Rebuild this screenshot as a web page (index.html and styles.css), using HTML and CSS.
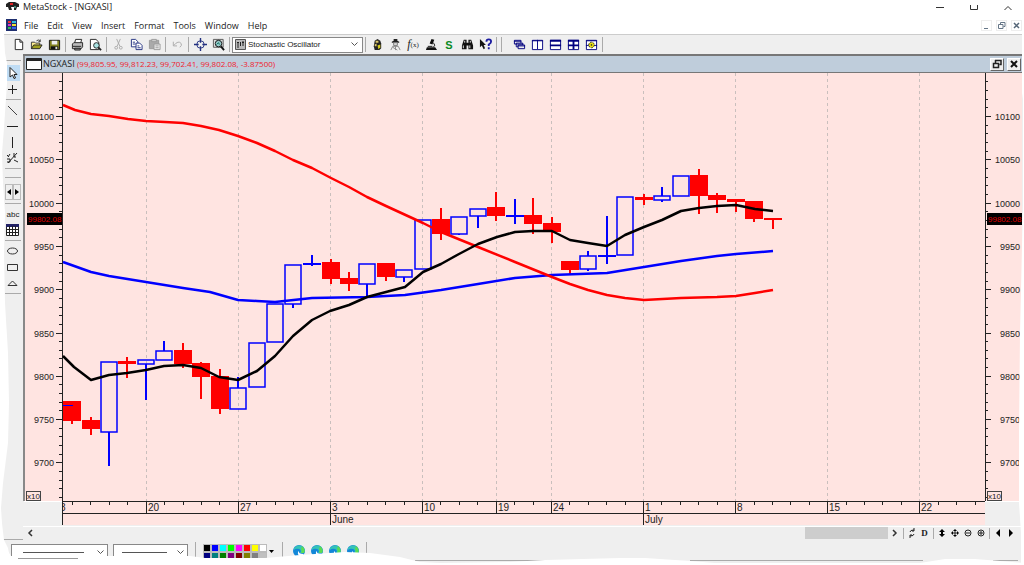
FILE: index.html
```
<!DOCTYPE html>
<html lang="en">
<head>
  <meta charset="UTF-8">
  <meta name="viewport" content="width=device-width, initial-scale=1.0">
  <title>MetaStock - [NGXASI]</title>

  <link rel="stylesheet" href="styles.css">
</head>
<body>
  <header class="titlebar">
    <svg class="app-icon" width="13" height="9" viewBox="0 0 13 9"><path d="M0 2L3 0H9L13 2V5L11 5L10 8H8V5H5L6 8H3L2 5H0Z" fill="#222"/><path d="M4 1H7V3H4Z" fill="#d22"/><path d="M8 4H10V6H8Z" fill="#487"/></svg>
    <h1 class="title">MetaStock - [NGXASI]</h1>
    <div class="window-buttons">
      <button aria-label="Minimize"><svg width="8" height="8"><path d="M0 4.500H8" stroke="#333"/></svg></button>
      <button aria-label="Maximize"><svg width="8" height="8"><path d="M.5 2V6.500H7.500V2" fill="none" stroke="#333"/></svg></button>
      <button aria-label="Close"><svg width="8" height="8"><path d="M.5 7L4 3.500L7.500 7" fill="none" stroke="#333"/></svg></button>
    </div>
  </header>

  <nav class="menubar">
    <svg class="doc-icon" width="11" height="12" viewBox="0 0 11 12"><path d="M0 0H11V12H0Z" fill="#203070"/><path d="M2 2H5V4H2Z" fill="#e33"/><path d="M6 2H10V4H6Z" fill="#3bd"/><path d="M2 5H5V7H2Z" fill="#d3c"/><path d="M6 5H10V7H6Z" fill="#ed3"/><path d="M2 8H5V10H2Z" fill="#3b5"/><path d="M6 8H10V10H6Z" fill="#36e"/></svg>
    <a href="#">File</a>
    <a href="#">Edit</a>
    <a href="#">View</a>
    <a href="#">Insert</a>
    <a href="#">Format</a>
    <a href="#">Tools</a>
    <a href="#">Window</a>
    <a href="#">Help</a>
    <div class="child-buttons">
      <button aria-label="Minimize chart"><svg width="9" height="9"><path d="M2 7.500H6" stroke="#678"/></svg></button>
      <button aria-label="Restore chart"><svg width="9" height="9"><path d="M3.500 3V1.500H8V5.500H6.500M1.500 3.500H6V7.500H1.500Z" fill="none" stroke="#678"/></svg></button>
      <button aria-label="Close chart"><svg width="9" height="9"><path d="M2 2L7 7M7 2L2 7" stroke="#567" stroke-width="1.500"/></svg></button>
    </div>
  </nav>

  <div class="toolbar">
    <button aria-label="New"><svg viewBox="0 0 14 14"><path d="M3.500 1.500H8.500L11.500 4.500V12.500H3.500ZM8.500 1.500V4.500H11.500" fill="#fff" stroke="#222"/></svg></button>
    <button aria-label="Open"><svg viewBox="0 0 14 14"><path d="M1.500 11.500V4.500H5L6 5.500H10.500V7.500" fill="#ffef90" stroke="#333"/><path d="M1.500 11.500L4 7.500H13L10.500 11.500Z" fill="#a0a020" stroke="#222"/><path d="M7 3Q9 1 11 3.500M11 1.500V4H9" fill="none" stroke="#333"/></svg></button>
    <button aria-label="Save"><svg viewBox="0 0 14 14"><path d="M1.500 2.500H12.500V12.500H1.500Z" fill="#808020" stroke="#111"/><path d="M4 3H10V7H4Z" fill="#eee"/><path d="M3 9H11V12H3Z" fill="#111"/><path d="M8 9.500H10V12H8Z" fill="#ddd"/></svg></button>
    <span class="sep"></span>
    <button aria-label="Print"><svg viewBox="0 0 14 14"><path d="M4 5L5 1.500H11.500L10.500 5" fill="#fff" stroke="#222"/><path d="M1.500 6.500L3 5H12.500V9.500L11 11.500H1.500Z" fill="#bbb" stroke="#222"/><path d="M2 9H11M4 11H10V13H4Z" fill="#888" stroke="#222"/></svg></button>
    <button aria-label="Print preview"><svg viewBox="0 0 14 14"><path d="M1.500 1.500H7.500L10.500 4.500V12.500H1.500Z" fill="#fff" stroke="#222"/><circle cx="8" cy="8" r="3" fill="#a9e3e3" stroke="#222"/><path d="M10 10L13 13" stroke="#222" stroke-width="2"/></svg></button>
    <span class="sep"></span>
    <button aria-label="Cut"><svg viewBox="0 0 14 14" fill="none" stroke="#aaa"><path d="M5 1L8.500 9M9 1L5.500 9"/><circle cx="4.500" cy="10.500" r="1.500"/><circle cx="9.500" cy="10.500" r="1.500"/></svg></button>
    <button aria-label="Copy"><svg viewBox="0 0 14 14" fill="#fff" stroke="#223080"><path d="M1.500 1.500H6L8.500 4V9.500H1.500Z"/><path d="M6.500 5.500H10.500L13 8V12.500H6.500Z"/><path d="M3 4.500H5.500M3 6.500H6M8 8.500H10M8 10.500H11.500"/></svg></button>
    <button aria-label="Paste"><svg viewBox="0 0 14 14"><path d="M1.500 2.500H11.500V11.500H1.500Z" fill="#aaa" stroke="#999"/><path d="M4 1.500H9V4H4Z" fill="#ccc" stroke="#999"/><path d="M6.500 6.500H13V12.500H6.500Z" fill="#eee" stroke="#999"/><path d="M8 8.500H11.500M8 10.500H11.500" stroke="#999"/></svg></button>
    <span class="sep"></span>
    <button aria-label="Undo"><svg viewBox="0 0 14 14"><path d="M2.500 4V8.500H6.500M3 8Q8 2 11 6Q12 8 9.500 10" fill="none" stroke="#aaa"/></svg></button>
    <span class="sep"></span>
    <button aria-label="Crosshairs"><svg viewBox="0 0 14 14" fill="none" stroke="#223080"><circle cx="7" cy="7" r="4"/><path d="M7 0V5M7 9V14M0 7H5M9 7H14" stroke-width="1.500"/></svg></button>
    <button aria-label="Zoom"><svg viewBox="0 0 14 14"><path d="M1.500 1.500H12V10H1.500Z" fill="#ddd" stroke="#555"/><circle cx="7" cy="6" r="3.500" fill="#9cc" stroke="#111"/><path d="M9.500 9L13 13" stroke="#111" stroke-width="2"/><path d="M5 7L7 5L8 7" fill="none" stroke="#065"/></svg></button>
    <span class="sep"></span>
    <label class="indicator">
      <svg width="11" height="11" viewBox="0 0 11 11"><path d="M.5 .5H10.500V10.500H.5Z" fill="#bbb" stroke="#555"/><path d="M3 3V9M5.500 3V7M8 2V7M2 3.500H4M7 3.500H9" stroke="#222"/></svg>
      <select aria-label="Indicator"><option>Stochastic Oscillator</option></select>
      <svg class="chevron" width="7" height="5"><path d="M.5 .5L3.500 3.500L6.500 .5" fill="none" stroke="#555"/></svg>
    </label>
    <span class="sep"></span>
    <button aria-label="Expert advisor"><svg viewBox="0 0 14 14"><path d="M4 3L7 1L10 3L11 6V11L9 13H4L3 9Z" fill="#222"/><path d="M5 3H8V5H5ZM4 7L6 6V9H4Z" fill="#dcc76a"/><path d="M7 8L10 7V10L8 12Z" fill="#d8d020"/></svg></button>
    <button aria-label="Explorer"><svg viewBox="0 0 14 14"><path d="M3 5H11V4L9 3V1H5V3L3 4Z" fill="#222"/><path d="M5 5H9V8H5Z" fill="#ddd" stroke="#777"/><path d="M2 13L4 9H10L12 13M7 9V13M4 10L9 13" fill="none" stroke="#888"/></svg></button>
    <button class="fx" aria-label="Indicator builder"><i>f</i><small>(x)</small></button>
    <button aria-label="System tester"><svg viewBox="0 0 14 14"><path d="M7 1L10 2L8 7L5 6Z" fill="#111"/><path d="M9 5Q12 8 9 10M3 9H8" fill="none" stroke="#111"/><path d="M2 10H11L13 13H1Z" fill="#111"/></svg></button>
    <button class="dollar" aria-label="Option scope">S</button>
    <button aria-label="Find symbols"><svg viewBox="0 0 14 14"><path d="M3 2H6V5H8V2H11L13 8V12H8V8H6V12H1V8Z" fill="#111"/><path d="M2.500 8V11M9.500 8V11M4 3V5M10 3V5" stroke="#eee"/></svg></button>
    <button aria-label="Context help"><svg viewBox="0 0 14 14"><path d="M1 1V10L3 8L5 12L6.500 11L5 7.500H7.500Z" fill="#111"/><path d="M8 4Q8 1.500 10.500 1.500Q13 1.500 13 4Q13 5.500 10.500 7V8.500M10.500 10V12" fill="none" stroke="#1b1ba0" stroke-width="2"/></svg></button>
    <span class="sep"></span>
    <span class="grip"></span>
    <button aria-label="Cascade"><svg viewBox="0 0 14 14" fill="#eee" stroke="#000080"><path d="M1.500 2.500H8.500V6.500H1.500ZM1 3.500H9"/><path d="M3.500 5.500H10.500V9.500H3.500ZM3 6.500H11"/><path d="M5.500 7.500H12.500V11.500H5.500ZM5 8.500H13"/></svg></button>
    <button aria-label="Tile columns"><svg viewBox="0 0 14 14" fill="#fff" stroke="#000080"><path d="M1.500 2.500H12.500V12.500H1.500ZM7 2V12M1 3H13"/></svg></button>
    <button aria-label="Tile rows"><svg viewBox="0 0 14 14" fill="#fff" stroke="#000080"><path d="M1.500 2.500H12.500V12.500H1.500Z"/><path d="M1 3H13M1 8H13" stroke-width="2"/></svg></button>
    <button aria-label="Tile grid"><svg viewBox="0 0 14 14" fill="#fff" stroke="#000080"><path d="M1.500 2.500H12.500V12.500H1.500Z"/><path d="M1 3H13M1 8H13M7 2V12" stroke-width="2"/></svg></button>
    <button aria-label="Tile options"><svg viewBox="0 0 14 14" fill="#fff" stroke="#000080"><path d="M1.500 2.500H12.500V12.500H1.500ZM1 3H13M1 8H13"/><circle cx="7" cy="7.500" r="3" fill="#e8e010" stroke="#222" stroke-dasharray="2 1"/><circle cx="7" cy="7.500" r=".5" stroke="#222"/></svg></button>
    <span class="sep"></span>
  </div>

  <main class="workspace">
    <aside class="rail">
      <span class="rail-grip"></span>
      <button class="active" aria-label="Select"><svg viewBox="0 0 14 14"><path d="M4 1.500V11L6.500 9L8 12.500L9.500 12L8 8.500H11Z" fill="#fff" stroke="#222"/></svg></button>
      <button aria-label="Crosshair"><svg viewBox="0 0 14 14" stroke="#222"><path d="M2 7.500H11M6.500 3V12"/></svg></button>
      <hr>
      <button aria-label="Trendline"><svg viewBox="0 0 14 14" stroke="#444"><path d="M2 3L11 12"/></svg></button>
      <button aria-label="Horizontal line"><svg viewBox="0 0 14 14" stroke="#222"><path d="M1 7.500H12"/></svg></button>
      <button aria-label="Vertical line"><svg viewBox="0 0 14 14" stroke="#222"><path d="M6.500 2V13"/></svg></button>
      <button aria-label="More lines"><svg viewBox="0 0 14 14" fill="none" stroke="#222"><path d="M2 12L11 2M1 4L3 6M4 3L2 6M1 8H4V11H1M8 2V6H10M8 9L12 11"/></svg></button>
      <hr>
      <span class="rail-grip"></span>
      <div class="steps">
        <button aria-label="Previous"><svg viewBox="0 0 6 8"><path d="M5 1V7L1 4Z"/></svg></button>
        <button aria-label="Next"><svg viewBox="0 0 6 8"><path d="M1 1V7L5 4Z"/></svg></button>
      </div>
      <hr>
      <button class="abc" aria-label="Text">abc</button>
      <button aria-label="Grid"><svg viewBox="0 0 14 14"><path d="M.5 1.500H12.500V12.500H.5Z" fill="#fff" stroke="#222"/><path d="M0 2.500H13" stroke="#226" stroke-width="3"/><path d="M1 6.500H12M1 9.500H12M3.500 3V12M6.500 3V12M9.500 3V12" stroke="#222"/></svg></button>
      <hr>
      <button aria-label="Ellipse"><svg viewBox="0 0 14 14"><ellipse cx="6.500" cy="7" rx="5" ry="3" fill="none" stroke="#333"/></svg></button>
      <button aria-label="Rectangle"><svg viewBox="0 0 14 14"><path d="M1.500 4.500H11.500V10.500H1.500Z" fill="none" stroke="#333"/></svg></button>
      <button aria-label="Triangle"><svg viewBox="0 0 14 14"><path d="M2 9.500L6.500 5L11 9.500Z" fill="none" stroke="#333"/></svg></button>
      <hr>
    </aside>

    <section class="chart-window">
      <div class="chart-title">
        <svg width="16" height="12"><path d="M.5 .5H15.500V11.500H.5Z" fill="#fff" stroke="#222"/><path d="M1 2H15" stroke="#222" stroke-width="2"/></svg>
        <h2>NGXASI <span>(99,805.95, 99,812.23, 99,702.41, 99,802.08, -3.87500)</span></h2>
        <button aria-label="Restore"><svg width="10" height="10"><path d="M3 1.500H9V5.500H7.500M3.500 1V4M1.500 4.500H6.500V8.500H1.500Z" fill="none" stroke="#222" stroke-width="1.500"/></svg></button>
        <button aria-label="Close window"><svg width="10" height="10"><path d="M2 2L8 8M8 2L2 8" stroke="#111" stroke-width="2"/></svg></button>
      </div>
      <svg class="chart" id="chart" viewBox="23 73 999 453" role="img" aria-label="NGXASI daily candles"></svg>
      <div class="scroller">
        <button aria-label="Scroll left"><svg viewBox="0 0 10 10"><path d="M7 2L4 5L7 8" fill="none" stroke="#333" stroke-width="1.500"/></svg></button>
        <span class="thumb"></span>
        <button aria-label="Scroll right"><svg viewBox="0 0 10 10"><path d="M3 2L6 5L3 8" fill="none" stroke="#333" stroke-width="1.500"/></svg></button>
        <span class="sep"></span>
        <button aria-label="Refresh"><svg viewBox="0 0 10 10"><path d="M3 4Q3 2 7 2M7 0V3H5M7 6Q7 8 3 8M3 10V7H5" fill="none" stroke="#222"/></svg></button>
        <button class="daily" aria-label="Daily">D</button>
        <span class="sep"></span>
        <button aria-label="Vertical zoom"><svg viewBox="0 0 10 10"><path d="M5 1L8 4H6V6H8L5 9L2 6H4V4H2Z"/></svg></button>
        <button aria-label="Move"><svg viewBox="0 0 10 10"><path d="M5 2V8M2 5H8" stroke="#222"/><path d="M5 1L7 3H3ZM5 9L7 7H3ZM1 5L3 3V7ZM9 5L7 3V7Z"/></svg></button>
        <button aria-label="Zoom out"><svg viewBox="0 0 10 10" fill="none" stroke="#222"><circle cx="5" cy="5" r="3"/><path d="M3 5H7"/></svg></button>
        <button aria-label="Zoom in"><svg viewBox="0 0 10 10" fill="none" stroke="#222"><circle cx="5" cy="5" r="3"/><path d="M3 5H7M5 3V7"/></svg></button>
        <span class="sep"></span>
        <button aria-label="Back"><svg viewBox="0 0 10 10"><path d="M7 1V9L3 5Z"/></svg></button>
        <button aria-label="Forward"><svg viewBox="0 0 10 10"><path d="M3 1V9L7 5Z"/></svg></button>
      </div>
    </section>
  </main>

  <footer class="stylebar">
    <label class="line-pick line-style">
      <select aria-label="Line style"><option></option></select>
      <svg class="chevron" width="7" height="5"><path d="M.5 .5L3.500 3.500L6.500 .5" fill="none" stroke="#555"/></svg>
    </label>
    <label class="line-pick line-weight">
      <select aria-label="Line weight"><option></option></select>
      <svg class="chevron" width="7" height="5"><path d="M.5 .5L3.500 3.500L6.500 .5" fill="none" stroke="#555"/></svg>
    </label>
    <span class="grip"></span>
    <div class="palette" id="palette"></div>
    <svg class="caret" width="5" height="3"><path d="M0 0H5L2.500 3Z"/></svg>
    <span class="grip"></span>
    <div class="links" id="links"></div>
    <span class="grip-end"></span>
  </footer>

  <!-- torn paper edges -->
  <svg class="tear tear-left" viewBox="0 0 14 532" preserveAspectRatio="none"><path d="M0 0H4L5 20L7 30L7 50L4 95L2 120L3 150L5 180L4 220L5 270L8 320L9 370L8 410L3 450L1 475L2 490L4 507L8 515L11 532H0Z" fill="#fff"/></svg>
  <svg class="tear tear-right" viewBox="0 0 6 532" preserveAspectRatio="none"><path d="M6 0H4V60L5 66V170L2 300L1 400L1 470L3 500L3 532H6Z" fill="#fff"/></svg>
  <svg class="tear tear-bottom" viewBox="0 0 1024 17" preserveAspectRatio="none"><path d="M415 12.500H545M690 12.500H923M993 12.500H1018" stroke="#aaa"/><path d="M0 0H6L11 8H190L205 10H265L300 7L345 4L370 5L400 9L420 14L440 15L510 14L545 12L620 10L645 10L690 13L715 15H920L945 11L975 11L1000 13L1024 15V17H0Z" fill="#fff"/><path d="M18 10.500H78" stroke="#999"/></svg>

  <script src="script.js"></script>
</body>
</html>
```
FILE: styles.css
```
* { margin: 0; padding: 0; box-sizing: border-box; }

body {
  position: relative;
  min-height: 100vh;
  display: flex;
  flex-direction: column;
  overflow: hidden;
  background: #fff;
  color: #222;
  font-family: 'Open Sans', 'Noto Sans', sans-serif;
  font-size: 9px;
}
button {
  display: flex;
  justify-content: center;
  align-items: center;
  border: 0;
  background: none;
  color: inherit;
  font: inherit;
}
a { color: inherit; text-decoration: none; }
h1,
h2 { font-size: 9px; font-weight: 400; }

.titlebar {
  display: flex;
  align-items: center;
  height: 13px;
  padding: 0 8px 0 6px;
}
.titlebar .title { margin-left: 4px; }
.window-buttons {
  display: flex;
  gap: 26px;
  margin-left: auto;
  padding-right: 4px;
}

.menubar {
  display: flex;
  align-items: center;
  gap: 9px;
  height: 21px;
  padding: 3px 0 0 6px;
}
.menubar .doc-icon { margin-right: -2px; }
.child-buttons {
  display: flex;
  gap: 4px;
  margin-left: auto;
  padding-right: 2px;
}
.child-buttons button { width: 11px; height: 11px; border: 1px solid #eee; }

.toolbar {
  display: flex;
  align-items: center;
  height: 20px;
  padding-left: 9px;
  background: #efefef;
  border-top: 1px solid #ccc;
}
.toolbar button { width: 18px; height: 18px; }
.toolbar button svg { width: 13px; height: 13px; }
.sep {
  width: 5px;
  height: 15px;
  background: linear-gradient(#aaa, #aaa) 2px 0 / 1px 100% no-repeat;
}
.grip {
  width: 11px;
  height: 15px;
  background: linear-gradient(#aaa, #aaa) 2px 0 / 1px 100% no-repeat;
}
.toolbar .fx { font-family: 'Liberation Serif', serif; font-size: 12px; }
.toolbar .fx small { font-size: 7px; }
.toolbar .dollar { color: #0a8a1e; font-family: 'Liberation Sans', sans-serif; font-size: 11px; font-weight: 700; }
.indicator {
  display: flex;
  align-items: center;
  gap: 2px;
  width: 131px;
  height: 16px;
  padding: 0 4px 0 2px;
  background: #fff;
  border: 1px solid #888;
}
select {
  flex: 1;
  min-width: 0;
  appearance: none;
  border: 0;
  background: none;
  color: #222;
  font-family: 'Liberation Sans', sans-serif;
  font-size: 8px;
}
.chevron { flex: none; pointer-events: none; }

.workspace {
  display: flex;
  padding-right: 2px;
  background: #efefef;
}
.rail {
  width: 23px;
  display: flex;
  flex-direction: column;
  align-items: center;
  padding-left: 3px;
  border-bottom: 1px solid #aaa;
}
.rail button { width: 14px; height: 16px; }
.rail button svg { width: 14px; height: 14px; }
.rail .active { background: #bfdcf4; }
.rail hr {
  width: 16px;
  height: 1px;
  margin: 2px 0;
  border: 0;
  background: #aaa;
}
.rail-grip {
  width: 16px;
  height: 3px;
  margin: 4px 0;
  border-bottom: 1px solid #aaa;
}
.steps { display: flex; margin: 2px 0 1px; }
.rail .steps button { width: 8px; border: 1px solid #bbb; }
.rail .steps svg { width: 6px; height: 8px; }
.rail .abc { font-family: 'Liberation Sans', sans-serif; font-size: 8px; }

.chart-window {
  flex: 1;
  min-width: 0;
  border-top: 2px solid #777;
}
.chart-title {
  display: flex;
  align-items: center;
  gap: 3px;
  height: 17px;
  padding: 0 1px;
  background: #bfcddb;
  border-bottom: 1px solid #777;
  border-left: 2px solid #888;
}
.chart-title h2 { flex: 1; margin-left: -2px; padding-bottom: 2px; }
.chart-title h2 span { color: #f0202c; font-size: 8px; }
.chart-title button {
  width: 14px;
  height: 13px;
  background: #efefef;
  border: 1px solid;
  border-color: #fff #666 #666 #fff;
}
.chart { display: block; width: 100%; height: auto; }
.chart text { font-family: 'Liberation Sans', sans-serif; font-size: 9px; fill: #222; }
.chart .date { font-size: 10px; }
.chart .scale { font-size: 8px; }
.chart .tag { font-size: 8px; fill: #e00000; }

.scroller {
  display: flex;
  align-items: center;
  height: 14px;
  padding: 0 5px 1px 0;
  border-top: 1px solid #fff;
}
.scroller button { width: 13px; height: 12px; }
.scroller button svg { width: 10px; height: 10px; }
.scroller .sep { width: 4px; height: 11px; }
.scroller .thumb {
  width: 83px;
  height: 12px;
  margin-left: auto;
  background: #cdcdcd;
}
.scroller .daily { font-family: 'Liberation Serif', serif; font-weight: 700; }

.stylebar {
  flex: 1;
  display: flex;
  align-items: flex-start;
  padding: 2px 0 0 11px;
  background: #efefef;
}
.line-pick {
  display: flex;
  align-items: center;
  height: 17px;
  margin: 2px 5px 0 0;
  padding-right: 3px;
  border: 1px solid #888;
}
.line-style {
  width: 97px;
  background: linear-gradient(#555, #555) 11px 7px / 61px 1px no-repeat #fff;
}
.line-weight {
  width: 75px;
  background: linear-gradient(#555, #555) 8px 7px / 45px 1px no-repeat #fff;
}
.palette {
  display: grid;
  grid-template-columns: repeat(8, 6px);
  grid-auto-rows: 6px;
  gap: 2px;
  padding-top: 3px;
}
.palette button { outline: 1px solid #bbb; }
.caret { margin: 8px 6px 0 3px; }
.links { display: flex; gap: 6px; padding: 3px 7px 0 2px; }
.links a { display: block; width: 12px; height: 12px; }
.links svg { display: block; }
.grip-end { width: 1px; height: 15px; background: #aaa; }

.tear { position: absolute; pointer-events: none; }
.tear-left { left: 0; top: 33px; width: 14px; height: calc(100% - 33px); }
.tear-right { right: 0; top: 33px; width: 6px; height: calc(100% - 33px); }
.tear-bottom { left: 0; bottom: 0; width: 100%; height: 17px; }
```
FILE: script.js
```
const $ = el => document.getElementById(el)

const PLOT = { left: 62, right: 985, top: 73, axis: 501, months: 513, bottom: 525 }
const UP = '#0000ff'
const DOWN = '#ff0000'

// x, high, body top, body bottom, low, colour
const candles = [
  [72, 401, 401, 421, 424, DOWN], [91, 417, 420, 429, 435, DOWN],
  [109, 362, 362, 432, 466, UP], [127, 357, 361, 364, 378, DOWN],
  [146, 360, 360, 364, 400, UP], [164, 341, 351, 360, 360, UP],
  [183, 343, 350, 364, 368, DOWN], [201, 362, 363, 377, 399, DOWN],
  [220, 369, 376, 409, 414, DOWN], [238, 377, 388, 409, 409, UP],
  [257, 343, 343, 387, 387, UP], [275, 304, 304, 342, 342, UP],
  [293, 265, 265, 304, 308, UP], [312, 255, 263, 264, 266, UP],
  [331, 259, 262, 279, 284, DOWN], [349, 272, 278, 284, 291, DOWN],
  [367, 264, 264, 284, 296, UP], [386, 263, 263, 277, 281, DOWN],
  [404, 270, 270, 277, 282, UP], [423, 220, 220, 269, 269, UP],
  [441, 208, 219, 234, 240, DOWN], [459, 217, 217, 234, 235, UP],
  [478, 209, 209, 216, 228, UP], [496, 192, 207, 216, 221, DOWN],
  [515, 199, 215, 216, 224, UP], [533, 198, 215, 224, 234, DOWN],
  [552, 217, 223, 232, 243, DOWN], [570, 261, 261, 270, 274, DOWN],
  [588, 251, 256, 269, 271, UP], [607, 216, 255, 256, 264, UP],
  [625, 197, 197, 255, 255, UP], [644, 194, 197, 200, 205, DOWN],
  [662, 187, 196, 200, 202, UP], [681, 176, 176, 196, 196, UP],
  [699, 169, 175, 196, 214, DOWN], [717, 193, 195, 200, 213, DOWN],
  [736, 199, 199, 202, 212, DOWN], [754, 201, 201, 219, 222, DOWN],
  [773, 218, 218, 220, 229, DOWN]
]

const averages = {
  '#0000ff': '63,262 91,272 109,276 146,282 183,288 210,292 238,300 257,301 275,302 312,298 367,297 405,295 441,290 478,284 515,278 552,275 607,273 644,267 681,261 717,256 736,254 773,251',
  '#ff0000': '63,105 75,110 91,114 109,116 128,119 146,121 165,122 183,123 201,126 219,130 238,136 257,143 275,151 293,160 312,168 331,178 349,187 367,197 386,206 423,223 441,232 478,247 515,262 552,277 570,284 588,290 607,295 625,298 644,300 681,298 717,297 736,296 755,293 773,290',
  '#000000': '63,356 74,367 91,380 109,375 127,373 146,370 164,366 183,365 201,368 219,377 238,380 257,371 275,356 293,336 312,320 330,311 349,305 367,297 386,292 405,287 423,272 441,264 459,254 478,244 497,237 515,232 533,231 552,231 570,240 588,243 607,246 625,235 644,227 662,220 681,211 699,208 717,206 736,205 755,209 773,211'
}

const dates = [[147, '20'], [239, '27'], [331, '3'], [423, '10'], [497, '19'], [552, '24'], [644, '1'], [736, '8'], [828, '15'], [920, '22']]
const months = [[331, 'June'], [644, 'July']]

const line = (x1, y1, x2, y2, attrs = 'stroke="#222"') => `<path d="M${x1} ${y1}L${x2} ${y2}" ${attrs}/>`
const rect = (x, y, w, h, attrs) => `<rect x="${x}" y="${y}" width="${w}" height="${h}" ${attrs}/>`
const text = (x, y, value, attrs = '') => `<text x="${x}" y="${y}" ${attrs}>${value}</text>`

const { left, right, top: plotTop, axis, months: monthLine, bottom } = PLOT
let out = rect(24, plotTop, 998, axis - plotTop, 'fill="#ffe4e1"')
out += rect(left, axis, right - left, bottom - axis, 'fill="#ffe4e1"')
out += rect(24, axis, left - 24, 1, 'fill="#fff"') + rect(right, axis, 40, 1, 'fill="#fff"')
out += rect(23, plotTop, 2, axis - plotTop, 'fill="#888"')

// grid and date axis
dates.forEach(([x, label]) => {
  out += line(x - .5, plotTop, x - .5, axis, 'stroke="#c9bfbd" stroke-dasharray="3 3"')
  out += line(x - .5, axis, x - .5, monthLine)
  out += text(x + 1, 511, label, 'class="date"')
})
months.forEach(([x, label]) => {
  out += line(x - .5, monthLine, x - .5, bottom)
  out += text(x + 1, 523, label, 'class="date"')
})
for (let i = 0; i < 50; i++) {
  const x = Math.round(72 + i * 18.42) + .5
  if (x < right) out += line(x, axis, x, axis + 4)
}
out += `<svg x="63" y="502" width="10" height="11" viewBox="63 502 10 11">${text(60, 511, '8', 'class="date"')}</svg>`
out += line(left, axis + .5, right, axis + .5) + line(left, monthLine + .5, right, monthLine + .5)
out += line(left + .5, plotTop, left + .5, bottom) + line(right + .5, plotTop, right + .5, axis)

// price axes
for (let i = -4; i < 45; i++) {
  const y = Math.round(116 + i * 8.66) + .5
  if (y > axis) break
  const major = i >= 0 && i % 5 === 0 && i <= 40
  out += line(left - (major ? 6 : 3), y, left, y) + line(right, y, right + (major ? 6 : 3), y)
  if (major) {
    const label = 10100 - i * 10
    out += text(54, y + 3, label, 'text-anchor="end"') + text(1020, y + 3, label, 'text-anchor="end"')
  }
}

candles.forEach(([x, high, top, low, tail, color]) => {
  const body = low - top
  out += line(x, high, x, top, `stroke="${color}" stroke-width="2"`)
  out += line(x, low, x, tail, `stroke="${color}" stroke-width="2"`)
  if (color === UP && body > 2) out += rect(x - 8, top, 16, body, `fill="none" stroke="${color}" stroke-width="1.500"`)
  else out += rect(x - 9, top, 18, Math.max(body, 2), `fill="${color}"`)
})
out += line(63, 405.5, 73, 405.5, `stroke="${UP}"`)
Object.entries(averages).forEach(([color, points]) => {
  out += `<polyline points="${points}" fill="none" stroke="${color}" stroke-width="2.500" stroke-linejoin="round"/>`
})

// last price tags and scale boxes
;[27, 987].forEach(x => {
  out += rect(x, 213, 35, 12, 'fill="#000"') + text(x + 1, 222, '99802.08', 'class="tag"')
})
;[26, 987].forEach(x => {
  out += rect(x + .5, 491.5, 14, 9, 'fill="none" stroke="#444"') + text(x + 1, 499, 'x10', 'class="scale"')
})
$('chart').innerHTML = out

const colors = ['black', 'blue', 'cyan', 'lime', 'magenta', 'red', 'yellow', 'white', 'navy', 'teal', 'green', 'purple', 'maroon', 'olive', 'gray', 'silver']
$('palette').innerHTML = colors.map(c => `<button aria-label="${c}" style="background:${c}"></button>`).join('')

$('links').innerHTML = [1, 2, 3, 4].map(n => `
  <a href="#" aria-label="Web link ${n}"><svg width="12" height="12" viewBox="0 0 12 12">
    <circle cx="6" cy="6" r="6" fill="#1287d8"/>
    <path d="M1 3Q6-2 10 2Q13 5 11 8H7Q9 5 6 4Q3 3 1 5Z" fill="#35c3b8"/>
    <path d="M9 1Q13 4 11 8H8Q9 6 8 4Z" fill="#5bdc52"/>
    <path d="M6 6Q5 9 11 9L9 11Q4 11 5 7Z" fill="#fff"/>
  </svg></a>`).join('')
```
